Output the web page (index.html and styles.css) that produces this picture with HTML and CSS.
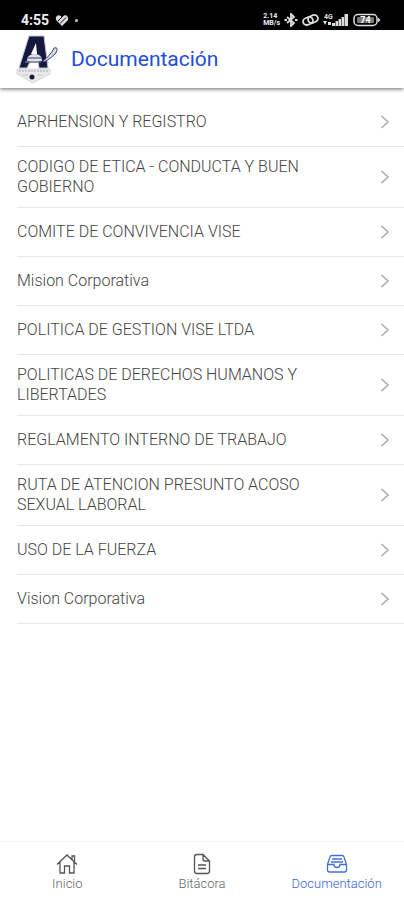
FILE: index.html
```html
<!DOCTYPE html>
<html lang="es">
<head>
  <meta charset="UTF-8" />
  <meta name="viewport" content="width=device-width, initial-scale=1.0" />
  <title>Documentación</title>
  <link rel="stylesheet" href="styles.css">
</head>
<body>

  <div class="status-bar">
    <span class="clock">4:55</span>
    <svg class="status-heart" width="14" height="13" viewBox="0 0 14 13">
      <path d="M7 12 1.500 6.500C-.8 3.500 3 -.8 6 2.300L7 3.300 8 2.300C11-.8 14.800 3.500 12.500 6.500Z" fill="#ddd"/>
      <path d="M3 7 8 2M5 9.500 11 3.500" stroke="#000" fill="none"/>
    </svg>
    <span class="status-dot"></span>
    <div class="status-icons">
      <span class="net-speed">2.14<br>MB/s</span>
      <svg width="14" height="14" viewBox="0 0 14 14" fill="none" stroke="#ddd" stroke-width="1.800">
        <path d="M3 4 10 10 7 13V1l3 3-7 6"/>
        <path d="M.5 7H3M11 7h2.500"/>
      </svg>
      <svg width="17" height="14" viewBox="0 0 17 14" fill="none" stroke="#ddd" stroke-width="1.800">
        <rect x="1" y="4.500" width="10" height="7" rx="3.500" transform="rotate(-20 6 8)"/>
        <rect x="6" y="2.500" width="10" height="7" rx="3.500" transform="rotate(-20 11 6)"/>
      </svg>
      <svg width="26" height="14" viewBox="0 0 26 14" fill="#ddd">
        <text class="signal-label" x="1" y="6">4G</text>
        <path d="M0 8h4l-2 4zM5 9h3v3H5zM9 10h3v3H9zM12.500 8h2.500v5h-2.500zM15.500 6H18v7h-2.500zM18.500 4H21v9h-2.500zM21.500 1H25v12h-3.500z"/>
      </svg>
      <svg width="28" height="14" viewBox="0 0 28 14">
        <rect x="1" y="1.500" width="23" height="11" rx="4" fill="none" stroke="#ddd" stroke-width="1.500"/>
        <rect x="4" y="4" width="17" height="6" rx="1" fill="#777"/>
        <path d="M25 4.500v5l2.500-2.500z" fill="#ddd"/>
        <text class="battery-label" x="12.500" y="10">74</text>
      </svg>
    </div>
  </div>

  <header class="toolbar">
    <svg class="logo" width="44" height="50" viewBox="0 0 44 50">
      <path d="M2 35h33v5L18 49 2 40z" fill="#e9e9ec" stroke="#ccc" stroke-width=".7"/>
      <path d="M14 2h15l4 32h-9l-1-8h-7l-4 8H4z" fill="#151940" stroke="#c4c4cc"/>
      <path d="M21 9l1 11h-6z" fill="#fff"/>
      <path d="M12 27c0-5 3-7 8-7s7 3 7 7z" fill="#dfe2eb"/>
      <path d="M12 24h15M10 28h16" stroke="#6f7594" stroke-width="1.500"/>
      <path d="M28 27c4-3 9-8 11-13 4-1 4 2 1 6-3 3-7 6-11 8" fill="#d9dbe6" stroke="#39427a"/>
      <path d="M4 37h29" stroke="#a6a8b3" stroke-dasharray="2 1"/>
      <path d="M7 41h6M22 41h6" stroke="#c9c9cf"/>
      <circle cx="17" cy="43" r="2.500" fill="#171a32"/>
    </svg>
    <h1 class="title">Documentación</h1>
  </header>

  <main class="content">
    <ul class="doc-list">
      <li><a class="doc" href="#">APRHENSION Y REGISTRO</a></li>
      <li><a class="doc" href="#">CODIGO DE ETICA - CONDUCTA Y BUEN GOBIERNO</a></li>
      <li><a class="doc" href="#">COMITE DE CONVIVENCIA VISE</a></li>
      <li><a class="doc" href="#">Mision Corporativa</a></li>
      <li><a class="doc" href="#">POLITICA DE GESTION VISE LTDA</a></li>
      <li><a class="doc" href="#">POLITICAS DE DERECHOS HUMANOS Y LIBERTADES</a></li>
      <li><a class="doc" href="#">REGLAMENTO INTERNO DE TRABAJO</a></li>
      <li><a class="doc" href="#">RUTA DE ATENCION PRESUNTO ACOSO SEXUAL LABORAL</a></li>
      <li><a class="doc" href="#">USO DE LA FUERZA</a></li>
      <li><a class="doc" href="#">Vision Corporativa</a></li>
    </ul>
  </main>

  <nav class="tabs">
    <a class="tab" href="#">
      <svg width="22" height="22" viewBox="0 0 22 22">
        <path d="M1 11.500 11 2l10 9.500M16 6.500V3h2.500v6M4 9v11h4.500v-7h5v7H18V9"/>
      </svg>
      <span>Inicio</span>
    </a>
    <a class="tab" href="#">
      <svg width="22" height="22" viewBox="0 0 22 22">
        <path d="M12 1.500H6Q3.500 1.500 3.500 4v14q0 2.500 2.500 2.500h10q2.500 0 2.500-2.500V8zM12 1.500V6q0 2 2 2h4.500M7 12h8M7 15.500h8"/>
      </svg>
      <span>Bitácora</span>
    </a>
    <a class="tab active" href="#">
      <svg width="22" height="22" viewBox="0 0 22 22">
        <path d="M1.500 11.500 4 4q.5-1.500 2-1.500h10q1.500 0 2 1.500l2.500 7.500V17q0 2-2 2h-15q-2 0-2-2zM1.500 11.500H8q0 3 3 3t3-3h6.500M6 6h10M5 9h12"/>
      </svg>
      <span>Documentación</span>
    </a>
  </nav>

  <script>
    // same chevron at the end of every row
    document.querySelectorAll('.doc').forEach(doc => {
      doc.insertAdjacentHTML('beforeend',
        '<svg class="chevron" width="10" height="16" viewBox="0 0 10 16"><path d="M1.500 2 8 8l-6.500 6"/></svg>');
    });
  </script>

</body>
</html>
```
FILE: styles.css
```css
* {
  box-sizing: border-box;
}

body {
  margin: 0;
  min-height: 100vh;
  display: flex;
  flex-direction: column;
  font-family: Roboto, sans-serif;
  background: #fff;
  color: #444;
}

a {
  color: inherit;
  text-decoration: none;
}

.status-bar {
  display: flex;
  align-items: flex-end;
  height: 30px;
  padding: 0 23px 3px 21px;
  background: #000;
  color: #eee;
}

.clock {
  font-size: 14px;
  line-height: 14px;
  font-weight: 700;
}

.status-heart {
  margin-left: 6px;
}

.status-dot {
  width: 3px;
  height: 3px;
  margin: 0 0 5px 6px;
  border-radius: 50%;
  background: #ccc;
}

.status-icons {
  display: flex;
  gap: 4px;
  margin-left: auto;
}

.net-speed {
  font-size: 7px;
  line-height: 7px;
  font-weight: 700;
}

.signal-label {
  font-size: 7px;
  font-weight: 700;
}

.battery-label {
  font-size: 9px;
  font-weight: 700;
  text-anchor: middle;
  fill: #fff;
}

.toolbar {
  display: flex;
  align-items: center;
  gap: 12px;
  height: 58px;
  padding: 0 15px;
  box-shadow: 0 1px 4px rgba(0, 0, 0, 0.6);
}

.title {
  margin: 0;
  font-size: 21px;
  line-height: 28px;
  font-weight: 400;
  color: #1f4cdb;
}

.content {
  flex: 1;
}

.doc-list {
  margin: 0;
  padding: 10px 0 0 17px;
  list-style: none;
}

.doc {
  display: flex;
  align-items: center;
  justify-content: space-between;
  gap: 60px;
  min-height: 49px;
  padding: 10px 14px 10px 0;
  border-bottom: 1px solid #e6e6e6;
  font-size: 16px;
  line-height: 20px;
  font-weight: 300;
}

.chevron {
  flex: none;
  fill: none;
  stroke: #b0b0b0;
  stroke-width: 1.7;
}

.tabs {
  display: flex;
  height: 59px;
  border-top: 1px solid #f5f5f5;
}

.tab {
  flex: 1;
  display: flex;
  flex-direction: column;
  align-items: center;
  padding-top: 11px;
  font-size: 13px;
  line-height: 18px;
  font-weight: 300;
  color: #666;
}

.tab svg {
  fill: none;
  stroke: #555;
  stroke-width: 1.3;
}

.tab.active {
  color: #3465d5;
}

.tab.active svg {
  stroke: #3f6fdb;
}
```
